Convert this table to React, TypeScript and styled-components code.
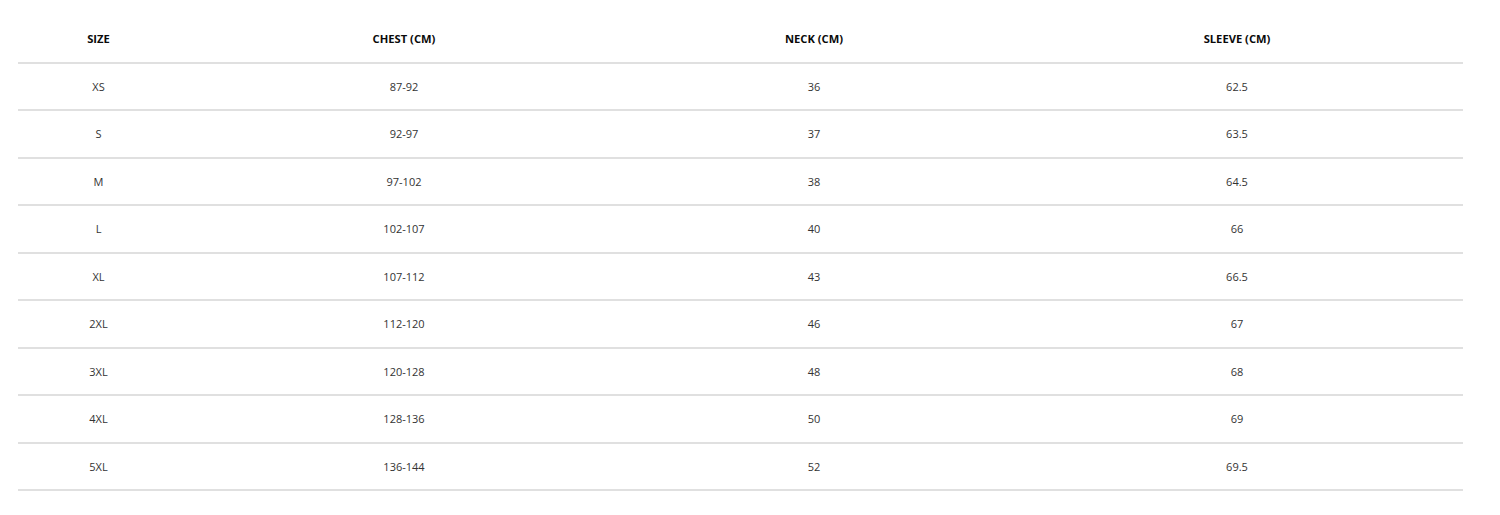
import React from "react";
import styled, { createGlobalStyle } from "styled-components";

const Global = createGlobalStyle`
  html, body { margin: 0; padding: 0; background: #fff; }
  body { font-family: "Open Sans", "Liberation Sans", sans-serif; }
`;

const Page = styled.div`
  padding: 16px 37px 0 18px;
`;

const Table = styled.div`
  display: flex;
  flex-direction: column;
  width: 1445px;
`;

const Row = styled.div`
  display: grid;
  grid-template-columns: 161px 450px 370px 1fr;
  height: 45.5px;
  border-bottom: 2px solid #e0e0e0;
  align-items: center;
`;

const Cell = styled.div<{ $head?: boolean; $last?: boolean }>`
  text-align: center;
  font-size: ${(p) => (p.$head ? "11.2px" : "11px")};
  line-height: 15px;
  font-weight: ${(p) => (p.$head ? 700 : 400)};
  color: ${(p) => (p.$head ? "#0a0a0a" : "#333")};
  padding-left: ${(p) => (p.$last ? "12px" : "0")};
  text-transform: ${(p) => (p.$head ? "uppercase" : "none")};
`;

const headers = ["Size", "Chest (cm)", "Neck (cm)", "Sleeve (cm)"];
const rows = [
  ["XS", "87-92", "36", "62.5"],
  ["S", "92-97", "37", "63.5"],
  ["M", "97-102", "38", "64.5"],
  ["L", "102-107", "40", "66"],
  ["XL", "107-112", "43", "66.5"],
  ["2XL", "112-120", "46", "67"],
  ["3XL", "120-128", "48", "68"],
  ["4XL", "128-136", "50", "69"],
  ["5XL", "136-144", "52", "69.5"],
];

export default function App() {
  return (
    <>
      <Global />
      <Page>
        <Table>
          <Row>
            {headers.map((h, i) => (
              <Cell key={h} $head $last={i === 3}>
                {h}
              </Cell>
            ))}
          </Row>
          {rows.map((r) => (
            <Row key={r[0]}>
              {r.map((c, i) => (
                <Cell key={i} $last={i === 3}>
                  {c}
                </Cell>
              ))}
            </Row>
          ))}
        </Table>
      </Page>
    </>
  );
}
